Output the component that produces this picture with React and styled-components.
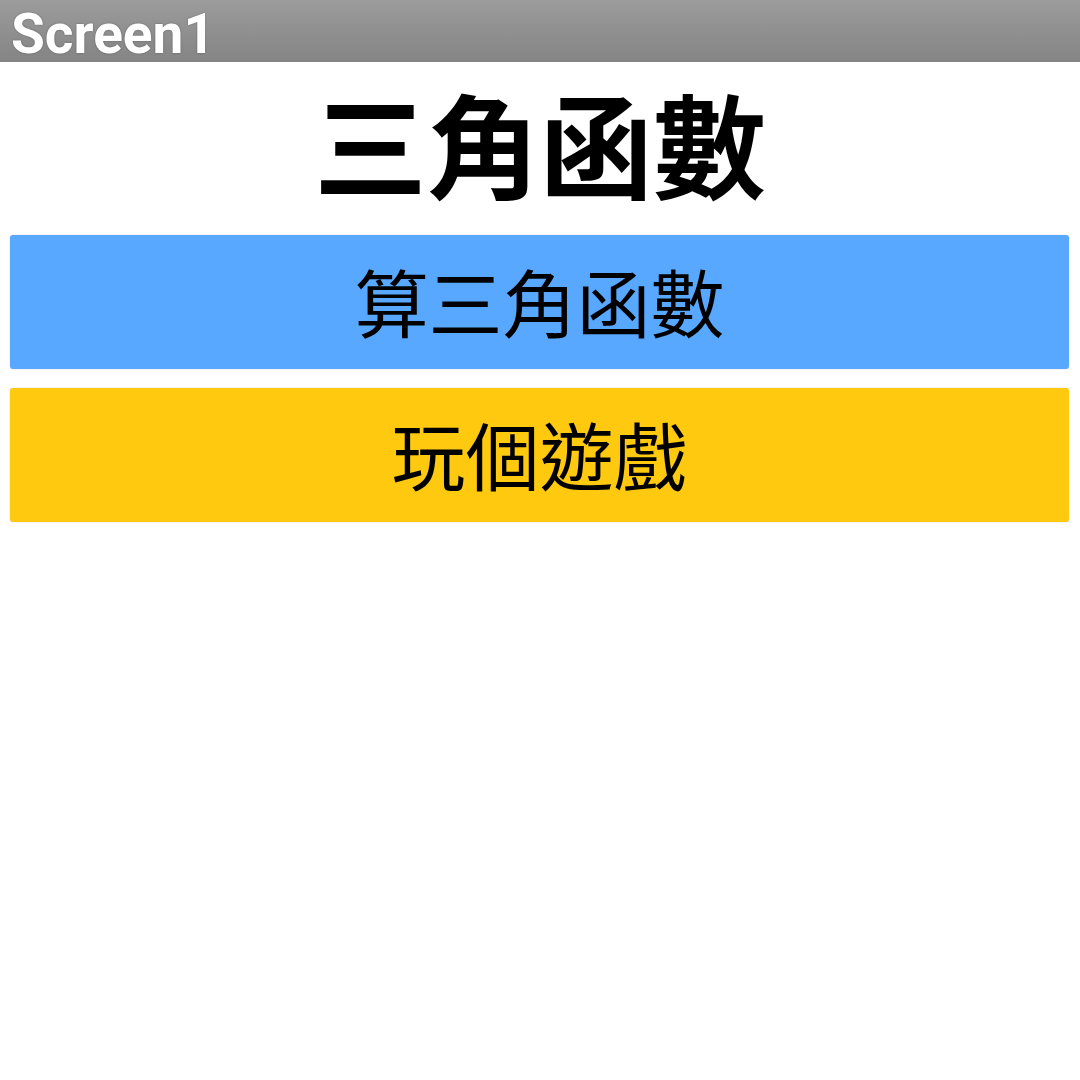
import React from 'react';
import styled, { createGlobalStyle } from 'styled-components';

const GlobalStyle = createGlobalStyle`
    html, body {
        margin: 0;
        padding: 0;
        background: #ffffff;
    }
    body {
        font-family: "Noto Sans CJK TC", "Noto Sans", sans-serif;
    }
`;

const Page = styled.div`
    width: 1080px;
    min-height: 1080px;
    display: flex;
    flex-direction: column;
`;

const TitleBar = styled.div`
    height: 62px;
    box-sizing: border-box;
    background: linear-gradient(to bottom, #9c9c9c, #848484);
    display: flex;
    align-items: center;
    padding: 6px 0 0 11px;
`;

const BarTitle = styled.h1`
    margin: 0;
    color: #ffffff;
    font-family: Roboto, "Liberation Sans", sans-serif;
    font-weight: 700;
    font-size: 55px;
    line-height: 1;
    text-shadow: 0 0 2px rgba(0, 0, 0, 0.35);
`;

const Heading = styled.h2`
    margin: 23px 0 37px;
    text-align: center;
    font-family: "Noto Sans CJK TC", sans-serif;
    font-weight: 700;
    font-size: 113px;
    line-height: 113px;
    color: #000000;
`;

const Buttons = styled.div`
    display: flex;
    flex-direction: column;
    gap: 19px;
    padding: 0 11px 0 10px;
`;

const Button = styled.button`
    height: 134px;
    border: none;
    border-radius: 3px;
    background: ${props => props.color};
    box-shadow: 0 0 2px rgba(0, 0, 0, 0.15);
    font-family: "Noto Sans CJK TC", sans-serif;
    font-size: 74px;
    font-weight: 400;
    color: #000000;
    display: flex;
    align-items: center;
    justify-content: center;
    padding: 0 0 6px;
    cursor: pointer;
`;

const App = () => {
    return (
        <Page>
            <GlobalStyle />
            <TitleBar>
                <BarTitle>Screen1</BarTitle>
            </TitleBar>
            <Heading>三角函數</Heading>
            <Buttons>
                <Button color='#58a8ff'>算三角函數</Button>
                <Button color='#fec90f'>玩個遊戲</Button>
            </Buttons>
        </Page>
    )
}

export default App
